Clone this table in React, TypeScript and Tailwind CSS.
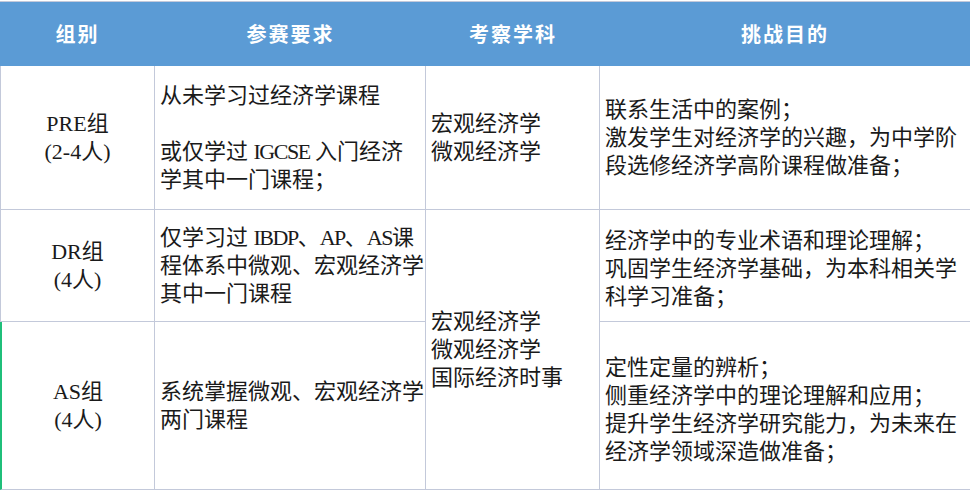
const cell = "border-r border-b border-[#c3c9da] text-[22px] leading-[28px] text-[#1a1a1a] whitespace-nowrap"

function Latin({ children }: { children: React.ReactNode }) {
  return <span className="tracking-[-1.5px]">{children}</span>
}

export default function App() {
  return (
    <div className="w-[970px] h-[490px] bg-white pt-px overflow-hidden font-['Liberation_Serif','Noto_Sans_CJK_SC',serif]">
      <div className="grid grid-cols-[155px_271px_174px_370px] grid-rows-[64px_144px_112px_168px] border-t border-[#c3c9da]">
        {["组别", "参赛要求", "考察学科", "挑战目的"].map((h) => (
          <div
            key={h}
            className="bg-[#5b9bd5] flex items-center justify-center text-white font-bold text-[20px] tracking-[2px] font-['Noto_Sans_CJK_SC',sans-serif]"
          >
            {h}
          </div>
        ))}

        <div className={`${cell} border-l flex flex-col items-center justify-center`}>
          <span>PRE组</span>
          <span>(2-4人)</span>
        </div>
        <div className={`${cell} flex flex-col justify-center pl-[5px]`}>
          <span>从未学习过经济学课程</span>
          <span>&nbsp;</span>
          <span>或仅学过 <Latin>IGCSE</Latin> 入门经济</span>
          <span>学其中一门课程；</span>
        </div>
        <div className={`${cell} flex flex-col justify-center pl-[5px]`}>
          <span>宏观经济学</span>
          <span>微观经济学</span>
        </div>
        <div className={`${cell} border-r-0 flex flex-col justify-center pl-[5px]`}>
          <span>联系生活中的案例；</span>
          <span>激发学生对经济学的兴趣，为中学阶</span>
          <span>段选修经济学高阶课程做准备；</span>
        </div>

        <div className={`${cell} border-l flex flex-col items-center justify-center`}>
          <span>DR组</span>
          <span>(4人)</span>
        </div>
        <div className={`${cell} flex flex-col justify-center pl-[5px]`}>
          <span>
            仅学习过 <Latin>IBDP</Latin>、<Latin>AP</Latin>、<Latin>AS</Latin>课
          </span>
          <span>程体系中微观、宏观经济学</span>
          <span>其中一门课程</span>
        </div>
        <div className={`${cell} row-span-2 flex flex-col justify-center pl-[5px]`}>
          <span>宏观经济学</span>
          <span>微观经济学</span>
          <span>国际经济时事</span>
        </div>
        <div className={`${cell} border-r-0 flex flex-col justify-center pl-[5px] pt-[6px]`}>
          <span>经济学中的专业术语和理论理解；</span>
          <span>巩固学生经济学基础，为本科相关学</span>
          <span>科学习准备；</span>
        </div>

        <div className={`${cell} border-l-2 border-l-[#1fbf7a] flex flex-col items-center justify-center`}>
          <span>AS组</span>
          <span>(4人)</span>
        </div>
        <div className={`${cell} flex flex-col justify-center pl-[5px]`}>
          <span>系统掌握微观、宏观经济学</span>
          <span>两门课程</span>
        </div>
        <div className={`${cell} border-r-0 flex flex-col justify-center pl-[5px] pt-[8px]`}>
          <span>定性定量的辨析；</span>
          <span>侧重经济学中的理论理解和应用；</span>
          <span>提升学生经济学研究能力，为未来在</span>
          <span>经济学领域深造做准备；</span>
        </div>
      </div>
    </div>
  )
}
